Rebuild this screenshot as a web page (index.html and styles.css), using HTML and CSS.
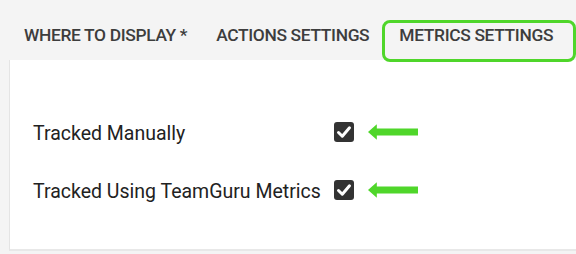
FILE: index.html
```html
<!DOCTYPE html>
<html>
<head>
<meta charset="utf-8">
<link rel="stylesheet" href="styles.css">
</head>
<body>
<div class="tabs">
  <div class="tab tab-first">WHERE TO DISPLAY *</div>
  <div class="tab tab-second">ACTIONS SETTINGS</div>
  <div class="tab tab-active">METRICS SETTINGS</div>
</div>
<div class="panel">
  <div class="grid">
    <div class="label">Tracked Manually</div>
    <div class="check"><svg width="20" height="20" viewBox="0 0 20 20"><rect x="0" y="0" width="20" height="20" rx="3" fill="#333"/><path d="M4.5 10.5 L8.3 14.2 L15.5 5.8" fill="none" stroke="#fff" stroke-width="3" stroke-linecap="round" stroke-linejoin="round"/></svg></div>
    <div class="arrow"><svg width="51" height="16" viewBox="0 0 51 16"><polygon points="0,8 9,0 9,4.5 51,4.5 51,11.5 9,11.5 9,16" fill="#4fd62a"/></svg></div>
    <div class="label">Tracked Using TeamGuru Metrics</div>
    <div class="check"><svg width="20" height="20" viewBox="0 0 20 20"><rect x="0" y="0" width="20" height="20" rx="3" fill="#333"/><path d="M4.5 10.5 L8.3 14.2 L15.5 5.8" fill="none" stroke="#fff" stroke-width="3" stroke-linecap="round" stroke-linejoin="round"/></svg></div>
    <div class="arrow"><svg width="51" height="16" viewBox="0 0 51 16"><polygon points="0,8 9,0 9,4.5 51,4.5 51,11.5 9,11.5 9,16" fill="#4fd62a"/></svg></div>
  </div>
</div>
</body>
</html>
```
FILE: styles.css
```css
html, body {
  margin: 0;
  padding: 0;
  background: #f4f4f4;
  font-family: Roboto, "Liberation Sans", sans-serif;
}
.tabs {
  display: flex;
  align-items: flex-start;
  padding: 20px 0 0 7px;
  height: 40px;
  position: relative;
  z-index: 1;
}
.tab {
  font-size: 17.4px;
  font-weight: 500;
  letter-spacing: -0.35px;
  line-height: 21px;
  color: #3d3d3d;
  padding: 2px 14px 13px 14px;
  border: 3px solid transparent;
  white-space: nowrap;
}
.tab-second {
  margin-left: -5px;
}
.tab-active {
  margin-left: -4px;
  padding-right: 20px;
  border-color: #4fd62a;
  border-radius: 8px;
}
.panel {
  margin-left: 9px;
  background: #fff;
  border-left: 1px solid #e4e4e4;
  border-bottom: 2px solid #e8e8e8;
  height: 189px;
  padding: 0 0 0 23px;
}
.grid {
  display: grid;
  grid-template-columns: max-content 20px 51px;
  column-gap: 13px;
  row-gap: 34px;
  align-items: center;
  padding-top: 60px;
}
.label {
  font-size: 19.5px;
  line-height: 20px;
  padding-top: 4px;
  color: #222;
}
.check, .arrow {
  display: flex;
}
.arrow {
  margin-left: 1px;
}
```
